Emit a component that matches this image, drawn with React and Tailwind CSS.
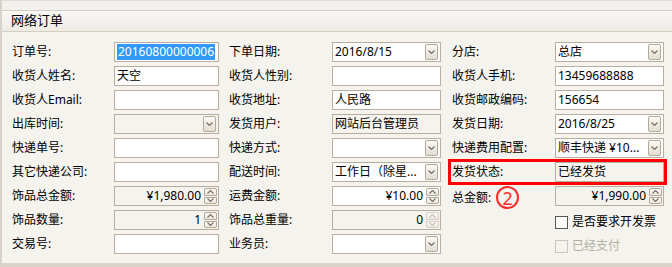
import React from 'react';

const font = { fontFamily: '"Noto Sans", "Noto Sans CJK SC", sans-serif' };

function Chevron({ up, disabled }) {
  return (
    <svg width="7" height="4" viewBox="0 0 7 4" className="block">
      <polyline
        points={up ? '0.5,3.5 3.5,0.5 6.5,3.5' : '0.5,0.5 3.5,3.5 6.5,0.5'}
        fill="none"
        stroke={disabled ? '#c9c3b8' : '#7a7166'}
        strokeWidth="1.2"
      />
    </svg>
  );
}

function ComboButton() {
  return (
    <div className="mr-[2px] flex h-[16px] w-[13px] shrink-0 items-center justify-center rounded-[2px] border border-[#b4a998] bg-gradient-to-b from-[#fbfaf8] to-[#e3ddd2]">
      <Chevron />
    </div>
  );
}

function SpinButtons({ disabled }) {
  const cls = disabled ? 'border-[#d6d0c6]' : 'border-[#b4a998]';
  return (
    <div className="mr-[1px] flex h-[16px] w-[13px] shrink-0 flex-col gap-[1px]">
      <div className={`flex flex-1 items-center justify-center rounded-t-[2px] border bg-gradient-to-b from-[#fbfaf8] to-[#ece8df] ${cls}`}>
        <Chevron up disabled={disabled} />
      </div>
      <div className={`flex flex-1 items-center justify-center rounded-b-[2px] border bg-gradient-to-b from-[#fbfaf8] to-[#ece8df] ${cls}`}>
        <Chevron disabled={disabled} />
      </div>
    </div>
  );
}

function Field({ value = '', type = 'text', gray, selected, right, spinDisabled }) {
  return (
    <div
      className={`flex h-[20px] items-center border border-[#b9ad9d] ${
        gray ? 'bg-[#f4f3ee]' : 'bg-white'
      }`}
    >
      <div
        className={`flex-1 overflow-hidden whitespace-nowrap px-[2px] text-[12px] leading-[16px] text-black ${
          right ? 'pr-[3px] text-right' : ''
        }`}
      >
        {selected ? (
          <span className="bg-[#3399ff] px-[1px] text-white">{value}</span>
        ) : (
          value
        )}
      </div>
      {type === 'combo' && <ComboButton />}
      {type === 'spin' && <SpinButtons disabled={spinDisabled} />}
    </div>
  );
}

function Label({ children, extra }) {
  return (
    <div className="flex items-center whitespace-nowrap text-[12px] text-black">
      {children}
      {extra}
    </div>
  );
}

function Checkbox({ label, disabled }) {
  return (
    <div className="col-span-2 flex items-center pl-[114px] text-[12px]">
      <div
        className={`mr-[4px] h-[13px] w-[13px] border ${
          disabled ? 'border-[#cac6be]' : 'border-[#5a5650] bg-[#fbfbf9]'
        }`}
      />
      <span className={disabled ? 'text-[#b3aea4]' : 'text-black'}>{label}</span>
    </div>
  );
}

const rows = [
  [
    ['订单号:', { value: '20160800000006', selected: true }],
    ['下单日期:', { value: '2016/8/15', type: 'combo' }],
    ['分店:', { value: '总店', type: 'combo' }]
  ],
  [
    ['收货人姓名:', { value: '天空' }],
    ['收货人性别:', {}],
    ['收货人手机:', { value: '13459688888' }]
  ],
  [
    ['收货人Email:', {}],
    ['收货地址:', { value: '人民路' }],
    ['收货邮政编码:', { value: '156654' }]
  ],
  [
    ['出库时间:', { type: 'combo', gray: true }],
    ['发货用户:', { value: '网站后台管理员', gray: true }],
    ['发货日期:', { value: '2016/8/25', type: 'combo' }]
  ],
  [
    ['快递单号:', {}],
    ['快递方式:', { type: 'combo' }],
    ['快递费用配置:', { value: '顺丰快递 ¥10...', type: 'combo' }]
  ],
  [
    ['其它快递公司:', {}],
    ['配送时间:', { value: '工作日（除星...', type: 'combo' }],
    ['发货状态:', { value: '已经发货', gray: true }]
  ],
  [
    ['饰品总金额:', { value: '¥1,980.00', type: 'spin', gray: true, right: true }],
    ['运费金额:', { value: '¥10.00', type: 'spin', right: true }],
    ['总金额:', { value: '¥1,990.00', type: 'spin', gray: true, right: true }]
  ],
  [
    ['饰品数量:', { value: '1', type: 'spin', gray: true, right: true }],
    ['饰品总重量:', { value: '0', type: 'spin', gray: true, right: true, spinDisabled: true }],
    null
  ],
  [
    ['交易号:', {}],
    ['业务员:', { type: 'combo' }],
    null
  ]
];

export default function App() {
  return (
    <div
      className="relative h-[267px] w-[672px] overflow-hidden border-l-2 border-[#d8d2ca] bg-[#f4f3ee]"
      style={font}
    >
      {/* top strip */}
      <div className="h-[11px] border-t border-b border-t-[#e2ddd6] border-b-[#d6cdc1] bg-[#f3f1ed]" />

      {/* header */}
      <div className="flex h-[21px] items-center border-b border-[#d6cdc1] bg-gradient-to-b from-[#f9f8f5] to-[#eeebe4] pl-[9px] text-[13px] text-black">
        网络订单
      </div>

      {/* form */}
      <div className="grid grid-cols-[102px_105px_113px_109px_114px_109px] grid-rows-[repeat(9,24px)] pl-[10px] pt-[10px]">
        {rows.map((row, ri) =>
          row.map((cell, ci) => {
            if (!cell) {
              return (
                <Checkbox
                  key={`${ri}-${ci}`}
                  label={ri === 7 ? '是否要求开发票' : '已经支付'}
                  disabled={ri === 8}
                />
              );
            }
            const [label, props] = cell;
            const pad = ci === 0 ? '' : ci === 1 ? 'pl-[10px]' : 'pl-[11px]';
            return (
              <React.Fragment key={`${ri}-${ci}`}>
                <div className={pad}>
                  <Label
                    extra={
                      ri === 6 && ci === 2 ? (
                        <span className="ml-[5px] flex h-[23px] w-[23px] items-center justify-center rounded-full border-2 border-[#ff2a2a] text-[18px] leading-none text-[#ff2a2a]">
                          2
                        </span>
                      ) : null
                    }
                  >
                    <span className="leading-[20px]">{label}</span>
                  </Label>
                </div>
                <div>
                  <Field {...props} />
                </div>
              </React.Fragment>
            );
          })
        )}
      </div>

      {/* red annotation box */}
      <div className="pointer-events-none absolute left-[446px] top-[159px] h-[26px] w-[219px] border-[3px] border-[#ff0000]" />

      {/* bottom strip */}
      <div className="absolute bottom-0 left-0 right-0 h-[4px] bg-[#d8d3cb]" />
    </div>
  );
}
